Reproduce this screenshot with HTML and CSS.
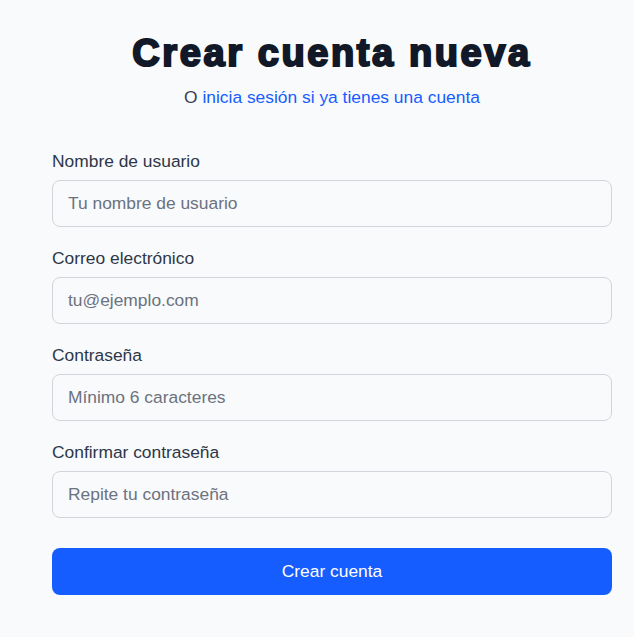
FILE: index.html
```html
<!DOCTYPE html>
<html lang="es">
<head>
<meta charset="utf-8">
<title>Crear cuenta nueva</title>
<link rel="stylesheet" href="styles.css">
</head>
<body>
<main class="page">
  <header class="head">
    <h1 class="title">Crear cuenta nueva</h1>
    <p class="subtitle">O <a class="link" href="#">inicia sesión si ya tienes una cuenta</a></p>
  </header>
  <form class="form">
    <div class="field">
      <label class="label" for="u">Nombre de usuario</label>
      <input class="input" id="u" type="text" placeholder="Tu nombre de usuario">
    </div>
    <div class="field">
      <label class="label" for="e">Correo electrónico</label>
      <input class="input" id="e" type="email" placeholder="tu@ejemplo.com">
    </div>
    <div class="field">
      <label class="label" for="p">Contraseña</label>
      <input class="input" id="p" type="password" placeholder="Mínimo 6 caracteres">
    </div>
    <div class="field">
      <label class="label" for="c">Confirmar contraseña</label>
      <input class="input" id="c" type="password" placeholder="Repite tu contraseña">
    </div>
    <button class="button" type="button">Crear cuenta</button>
  </form>
</main>
</body>
</html>
```

FILE: styles.css
```css
* { box-sizing: border-box; }
html, body {
  margin: 0;
  padding: 0;
  background: #f9fafb;
}
body {
  font-family: "Liberation Sans", Arial, sans-serif;
  color: #374151;
}
.page {
  width: 560px;
  margin-left: 52px;
  padding-top: 31px;
}
.head {
  text-align: center;
}
.title {
  margin: 0;
  font-size: 38px;
  line-height: 44px;
  font-weight: 700;
  color: #111827;
  letter-spacing: 2.6px;
  -webkit-text-stroke: 2.1px #111827;
}
.subtitle {
  margin: 9px 0 0;
  font-size: 17.4px;
  line-height: 26px;
  color: #374151;
}
.link {
  color: #165dff;
  text-decoration: none;
}
.form {
  margin-top: 38px;
  display: flex;
  flex-direction: column;
  gap: 18px;
}
.field {
  display: flex;
  flex-direction: column;
  gap: 6px;
}
.label {
  font-size: 17.4px;
  line-height: 26px;
  color: #2d3748;
}
.input {
  height: 47px;
  width: 100%;
  padding: 0 15px;
  border: 1px solid #d1d5db;
  border-radius: 8px;
  background: #f9fafb;
  font-family: "Liberation Sans", Arial, sans-serif;
  font-size: 17.4px;
  color: #111827;
  outline: none;
}
.input::placeholder {
  color: #6b7280;
  opacity: 1;
}
.button {
  margin-top: 12px;
  height: 47px;
  width: 100%;
  border: none;
  border-radius: 8px;
  background: #165dff;
  color: #ffffff;
  font-family: "Liberation Sans", Arial, sans-serif;
  font-size: 17.4px;
  cursor: pointer;
}
```
